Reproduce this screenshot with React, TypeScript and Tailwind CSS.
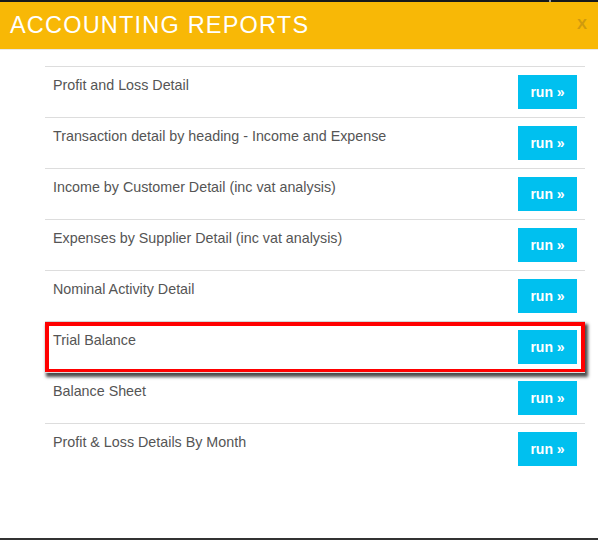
import React from "react";

const reports = [
  "Profit and Loss Detail",
  "Transaction detail by heading - Income and Expense",
  "Income by Customer Detail (inc vat analysis)",
  "Expenses by Supplier Detail (inc vat analysis)",
  "Nominal Activity Detail",
  "Trial Balance",
  "Balance Sheet",
  "Profit & Loss Details By Month",
];

export default function App() {
  return (
    <div
      className="w-[598px] h-[540px] bg-white flex flex-col overflow-hidden"
      style={{ fontFamily: '"Liberation Sans", Arial, sans-serif' }}
    >
      <div className="h-[2px] bg-[#16181b] relative shrink-0">
        <div className="absolute left-[549px] top-0 w-[2px] h-[2px] bg-[#9a9a9a]" />
      </div>
      <div className="h-[48px] bg-[#f8b806] flex items-center justify-between pl-[10px] pr-[11px] border-b border-[#e9e9e9] shrink-0">
        <h1 className="text-white text-[23.5px] leading-none tracking-[1.2px] pt-[1px]">
          ACCOUNTING REPORTS
        </h1>
        <span className="text-[#cf9a0e] font-bold text-[15px] leading-none mb-[4px]">X</span>
      </div>
      <div className="flex-1 pt-[16px] pl-[45px] pr-[13px]">
        {reports.map((r) => (
          <div
            key={r}
            className="relative border-t border-[#dddddd] h-[51px] pt-[8px] pl-[8px] pr-[8px] flex items-start justify-between"
          >
            <span className="text-[14.3px] leading-[20px] text-[#555555]">{r}</span>
            <button className="w-[59px] h-[34px] bg-[#00c0ef] text-white font-bold text-[14px] leading-none flex items-center justify-center pb-[1px]">
              run »
            </button>
            {r === "Trial Balance" && (
              <div className="absolute left-0 top-0 w-[540px] h-[51px] border-[4px] border-[#ff0000] shadow-[2px_3px_3px_1px_rgba(0,0,0,0.7)] pointer-events-none" />
            )}
          </div>
        ))}
      </div>
      <div className="h-[2px] bg-[#333333] shrink-0" />
    </div>
  );
}
